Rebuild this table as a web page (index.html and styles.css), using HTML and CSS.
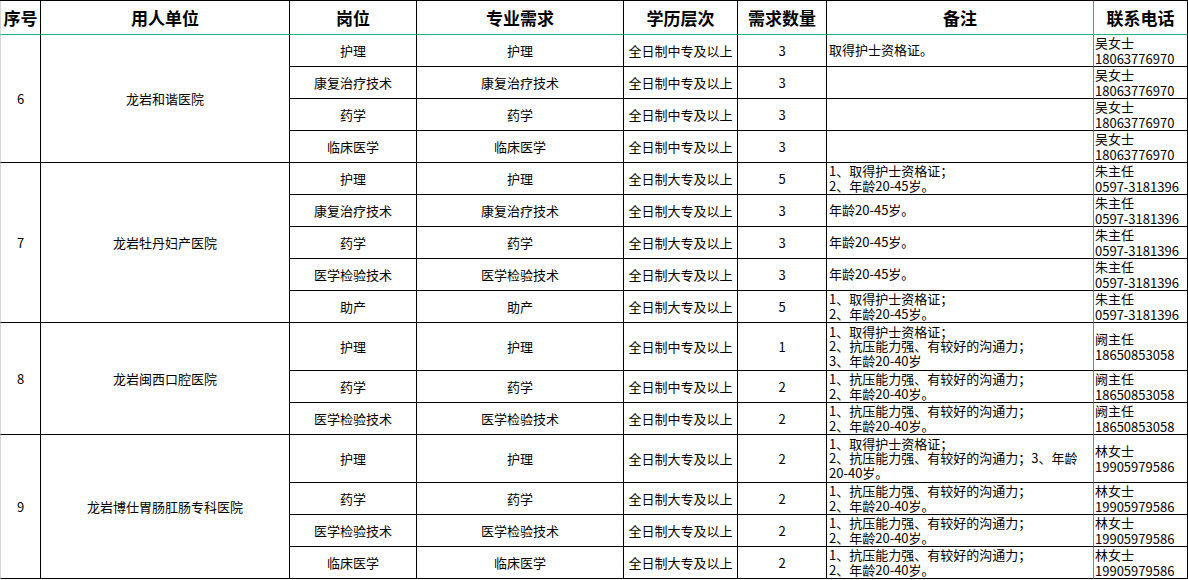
FILE: index.html
```html
<!DOCTYPE html>
<html lang="zh">
<head>
<meta charset="utf-8">
<title>招聘岗位表</title>
<link rel="stylesheet" href="styles.css">
</head>
<body>
<table class="sheet">
  <colgroup>
    <col class="c-no"><col class="c-unit"><col class="c-post"><col class="c-major"><col class="c-edu"><col class="c-num"><col class="c-note"><col class="c-tel">
  </colgroup>
  <thead>
    <tr class="head">
      <th class="first">序号</th><th>用人单位</th><th>岗位</th><th>专业需求</th><th>学历层次</th><th>需求数量</th><th class="note-col">备注</th><th>联系电话</th>
    </tr>
  </thead>
  <tbody>
    <tr class="r1">
      <td class="first" rowspan="4">6</td><td rowspan="4">龙岩和谐医院</td>
      <td>护理</td><td>护理</td><td>全日制中专及以上</td><td>3</td><td class="note">取得护士资格证。</td><td class="tel">吴女士<br>18063776970</td>
    </tr>
    <tr class="r1"><td>康复治疗技术</td><td>康复治疗技术</td><td>全日制中专及以上</td><td>3</td><td class="note"></td><td class="tel">吴女士<br>18063776970</td></tr>
    <tr class="r1"><td>药学</td><td>药学</td><td>全日制中专及以上</td><td>3</td><td class="note"></td><td class="tel">吴女士<br>18063776970</td></tr>
    <tr class="r1"><td>临床医学</td><td>临床医学</td><td>全日制中专及以上</td><td>3</td><td class="note"></td><td class="tel">吴女士<br>18063776970</td></tr>

    <tr class="r1">
      <td class="first" rowspan="5">7</td><td rowspan="5">龙岩牡丹妇产医院</td>
      <td>护理</td><td>护理</td><td>全日制大专及以上</td><td>5</td><td class="note">1、取得护士资格证；<br>2、年龄20-45岁。</td><td class="tel">朱主任<br>0597-3181396</td>
    </tr>
    <tr class="r1"><td>康复治疗技术</td><td>康复治疗技术</td><td>全日制大专及以上</td><td>3</td><td class="note">年龄20-45岁。</td><td class="tel">朱主任<br>0597-3181396</td></tr>
    <tr class="r1"><td>药学</td><td>药学</td><td>全日制大专及以上</td><td>3</td><td class="note">年龄20-45岁。</td><td class="tel">朱主任<br>0597-3181396</td></tr>
    <tr class="r1"><td>医学检验技术</td><td>医学检验技术</td><td>全日制大专及以上</td><td>3</td><td class="note">年龄20-45岁。</td><td class="tel">朱主任<br>0597-3181396</td></tr>
    <tr class="r1"><td>助产</td><td>助产</td><td>全日制大专及以上</td><td>5</td><td class="note">1、取得护士资格证；<br>2、年龄20-45岁。</td><td class="tel">朱主任<br>0597-3181396</td></tr>

    <tr class="r3">
      <td class="first" rowspan="3">8</td><td rowspan="3">龙岩闽西口腔医院</td>
      <td>护理</td><td>护理</td><td>全日制中专及以上</td><td>1</td><td class="note">1、取得护士资格证；<br>2、抗压能力强、有较好的沟通力；<br>3、年龄20-40岁</td><td class="tel">阙主任<br>18650853058</td>
    </tr>
    <tr class="r1"><td>药学</td><td>药学</td><td>全日制中专及以上</td><td>2</td><td class="note">1、抗压能力强、有较好的沟通力；<br>2、年龄20-40岁。</td><td class="tel">阙主任<br>18650853058</td></tr>
    <tr class="r1"><td>医学检验技术</td><td>医学检验技术</td><td>全日制中专及以上</td><td>2</td><td class="note">1、抗压能力强、有较好的沟通力；<br>2、年龄20-40岁。</td><td class="tel">阙主任<br>18650853058</td></tr>

    <tr class="r3">
      <td class="first" rowspan="4">9</td><td rowspan="4">龙岩博仕胃肠肛肠专科医院</td>
      <td>护理</td><td>护理</td><td>全日制大专及以上</td><td>2</td><td class="note">1、取得护士资格证；<br>2、抗压能力强、有较好的沟通力；3、年龄<br>20-40岁。</td><td class="tel">林女士<br>19905979586</td>
    </tr>
    <tr class="r1"><td>药学</td><td>药学</td><td>全日制大专及以上</td><td>2</td><td class="note">1、抗压能力强、有较好的沟通力；<br>2、年龄20-40岁。</td><td class="tel">林女士<br>19905979586</td></tr>
    <tr class="r1"><td>医学检验技术</td><td>医学检验技术</td><td>全日制大专及以上</td><td>2</td><td class="note">1、抗压能力强、有较好的沟通力；<br>2、年龄20-40岁。</td><td class="tel">林女士<br>19905979586</td></tr>
    <tr class="r1"><td>临床医学</td><td>临床医学</td><td>全日制大专及以上</td><td>2</td><td class="note">1、抗压能力强、有较好的沟通力；<br>2、年龄20-40岁。</td><td class="tel">林女士<br>19905979586</td></tr>
  </tbody>
</table>
</body>
</html>
```

FILE: styles.css
```css
html, body {
  margin: 0;
  padding: 0;
  background: #ffffff;
  overflow: hidden;
}

.sheet {
  border-collapse: separate;
  border-spacing: 0;
  table-layout: fixed;
  width: 1188px;
  border-top: 1px solid #000;
  font-family: "Noto Sans CJK SC", "Noto Sans", sans-serif;
  font-size: 13px;
  color: #000;
}

.c-no { width: 41px; }
.c-unit { width: 249px; }
.c-post { width: 127px; }
.c-major { width: 207px; }
.c-edu { width: 114px; }
.c-num { width: 89px; }
.c-note { width: 267px; }
.c-tel { width: 94px; }

.sheet th,
.sheet td {
  border-right: 1px solid #000;
  border-bottom: 1px solid #000;
  padding: 0 1px;
  text-align: center;
  vertical-align: middle;
  white-space: nowrap;
  overflow: hidden;
}

.sheet .first {
  border-left: 1px solid #d4d4d4;
}

.head th {
  height: 33px;
  font-size: 17px;
  font-weight: 700;
  line-height: 20px;
  border-bottom: 1px solid #1fb57a;
}

.sheet .note-col,
.sheet .note {
  border-right: 1px solid #1fb57a;
}

.r1 td { height: 31px; line-height: 15px; }
.r3 td { height: 47px; line-height: 15px; }

.sheet td.note {
  text-align: left;
  padding-left: 2px;
  line-height: 14.5px;
}

.sheet td.tel {
  text-align: left;
  padding-left: 1px;
  line-height: 15.5px;
}
```
